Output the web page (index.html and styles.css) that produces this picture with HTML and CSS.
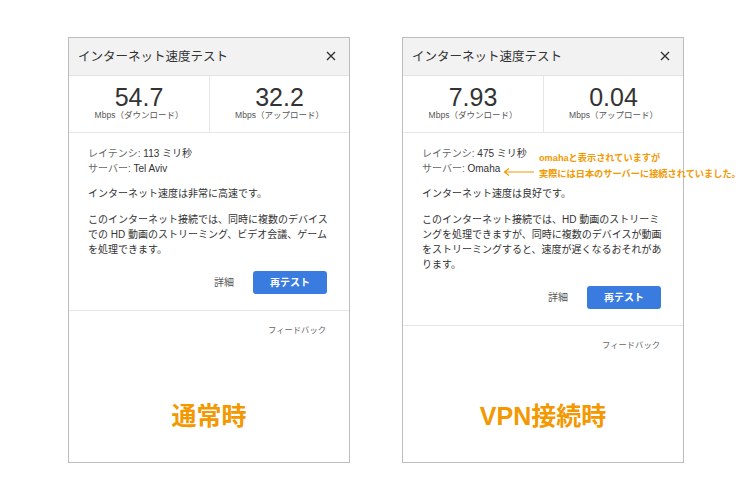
FILE: index.html
```html
<!DOCTYPE html>
<html lang="ja">
<head>
<meta charset="utf-8">
<title>インターネット速度テスト</title>
<link rel="stylesheet" href="styles.css">
</head>
<body>
<div class="stage">
  <section class="panel">
    <header class="panel-header">
      <h1 class="panel-title">インターネット速度テスト</h1>
      <svg class="close" width="10" height="10" viewBox="0 0 10 10"><path d="M1 1L9 9M9 1L1 9" stroke="#333" stroke-width="1.4" fill="none"/></svg>
    </header>
    <div class="speeds">
      <div class="speed">
        <div class="speed-value">54.7</div>
        <div class="speed-label">Mbps（ダウンロード）</div>
      </div>
      <div class="speed speed--right">
        <div class="speed-value">32.2</div>
        <div class="speed-label">Mbps（アップロード）</div>
      </div>
    </div>
    <div class="panel-body">
      <div class="meta"><span class="meta-key">レイテンシ:</span> 113 ミリ秒</div>
      <div class="meta"><span class="meta-key">サーバー:</span> Tel Aviv</div>
      <p class="status">インターネット速度は非常に高速です。</p>
      <p class="desc">このインターネット接続では、同時に複数のデバイス<br>での HD 動画のストリーミング、ビデオ会議、ゲーム<br>を処理できます。</p>
      <div class="actions">
        <span class="details">詳細</span>
        <span class="retest">再テスト</span>
      </div>
    </div>
    <div class="feedback">フィードバック</div>
    <div class="caption">通常時</div>
  </section>

  <section class="panel panel--vpn">
    <header class="panel-header">
      <h1 class="panel-title">インターネット速度テスト</h1>
      <svg class="close" width="10" height="10" viewBox="0 0 10 10"><path d="M1 1L9 9M9 1L1 9" stroke="#333" stroke-width="1.4" fill="none"/></svg>
    </header>
    <div class="speeds">
      <div class="speed">
        <div class="speed-value">7.93</div>
        <div class="speed-label">Mbps（ダウンロード）</div>
      </div>
      <div class="speed speed--right">
        <div class="speed-value">0.04</div>
        <div class="speed-label">Mbps（アップロード）</div>
      </div>
    </div>
    <div class="panel-body">
      <div class="meta"><span class="meta-key">レイテンシ:</span> 475 ミリ秒</div>
      <div class="meta"><span class="meta-key">サーバー:</span> Omaha</div>
      <p class="status">インターネット速度は良好です。</p>
      <p class="desc">このインターネット接続では、HD 動画のストリーミ<br>ングを処理できますが、同時に複数のデバイスが動画<br>をストリーミングすると、速度が遅くなるおそれがあ<br>ります。</p>
      <div class="actions">
        <span class="details">詳細</span>
        <span class="retest">再テスト</span>
      </div>
    </div>
    <div class="feedback">フィードバック</div>
    <div class="caption">VPN接続時</div>

    <svg class="note-arrow" width="32" height="10" viewBox="0 0 32 10"><path d="M31 5H2M6 1.5L1.5 5L6 8.5" stroke="#f39800" stroke-width="1.2" fill="none"/></svg>
    <div class="note">omahaと表示されていますが<br>実際には日本のサーバーに接続されていました。</div>
  </section>
</div>
</body>
</html>
```
FILE: styles.css
```css
* { box-sizing: border-box; }
html, body { margin: 0; padding: 0; background: #fff; }
body {
  font-family: "Liberation Sans", "Noto Sans CJK JP", sans-serif;
  color: #333;
}
.stage {
  display: flex;
  gap: 52px;
  padding: 37px 0 0 68px;
}
.panel {
  position: relative;
  width: 282px;
  height: 426px;
  border: 1px solid #bdbdbd;
  box-shadow: 0 1px 0 #dcdcdc;
  display: flex;
  flex-direction: column;
  background: #fff;
}
.panel-header {
  height: 38px;
  background: #f2f2f2;
  border-bottom: 1px solid #e2e2e2;
  display: flex;
  align-items: center;
  justify-content: space-between;
  padding: 0 13px 0 9px;
}
.panel-title {
  margin: 0;
  font-size: 12.5px;
  font-weight: normal;
  color: #333;
  line-height: 16px;
}
.close { display: block; margin-top: -2px; }
.speeds {
  display: grid;
  grid-template-columns: 1fr 1fr;
  height: 57px;
  border-bottom: 1px solid #e6e6e6;
}
.speed {
  display: flex;
  flex-direction: column;
  align-items: center;
  justify-content: center;
  padding-bottom: 3px;
}
.speed--right { border-left: 1px solid #e6e6e6; }
.speed-value {
  font-size: 25px;
  line-height: 25px;
  color: #333;
}
.speed-label {
  font-size: 8.5px;
  line-height: 11px;
  color: #555;
}
.panel-body {
  padding: 13px 22px 16px 19px;
  border-bottom: 1px solid #e6e6e6;
  font-size: 10px;
  line-height: 15px;
}
.meta { white-space: nowrap; color: #333; }
.meta-key { color: #666; }
.status { margin: 10px 0 0; white-space: nowrap; }
.desc { margin: 11px 0 0; white-space: nowrap; }
.actions {
  margin-top: 14px;
  display: flex;
  justify-content: flex-end;
  align-items: center;
  gap: 19px;
}
.details { color: #555; font-size: 10px; }
.retest {
  width: 74px;
  height: 23px;
  border-radius: 3px;
  background: #3a7be0;
  color: #fff;
  font-weight: bold;
  font-size: 10px;
  display: flex;
  align-items: center;
  justify-content: center;
}
.feedback {
  padding: 13px 23px 0 0;
  text-align: right;
  font-size: 8.3px;
  line-height: 12px;
  color: #666;
}
.caption {
  margin-top: auto;
  padding-bottom: 31px;
  text-align: center;
  font-size: 25px;
  line-height: 30px;
  font-weight: bold;
  color: #f39800;
}
.note-arrow {
  position: absolute;
  left: 100px;
  top: 129px;
}
.note {
  position: absolute;
  left: 136px;
  top: 112px;
  white-space: nowrap;
  font-size: 9.2px;
  line-height: 16px;
  font-weight: bold;
  color: #f39800;
}
```
